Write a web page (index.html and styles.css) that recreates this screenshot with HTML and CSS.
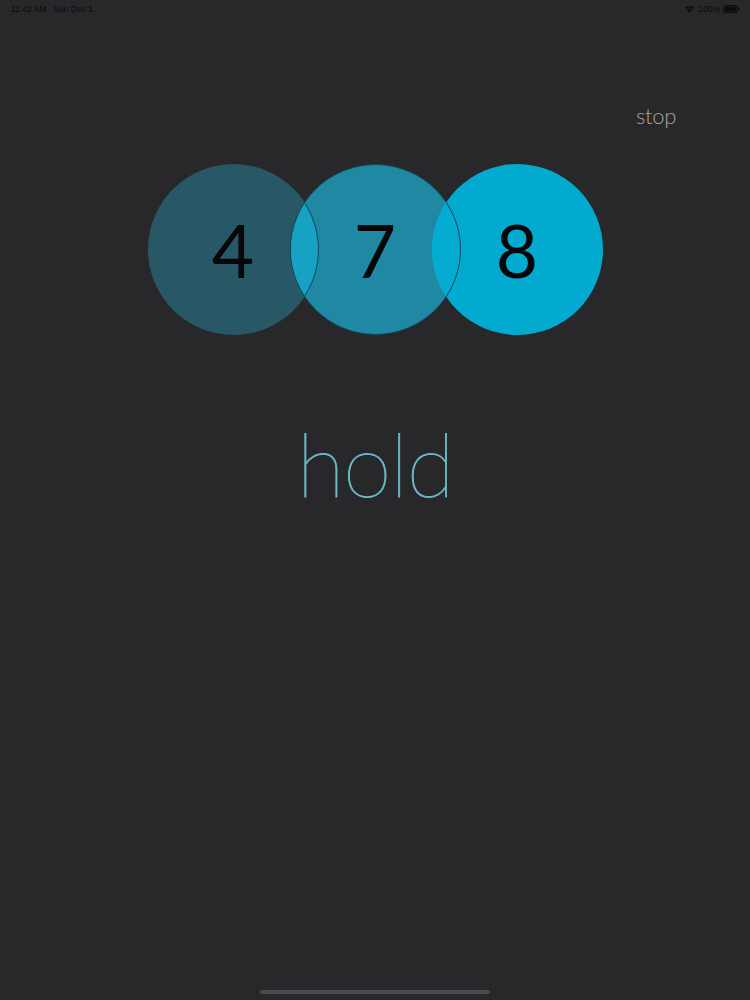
FILE: index.html
```html
<!DOCTYPE html>
<html>
<head>
<meta charset="utf-8">
<link rel="stylesheet" href="styles.css">
</head>
<body>
<div class="screen">
  <div class="status">
    <div class="status-left"><span>11:42 AM</span><span>Sun Dec 1</span></div>
    <div class="status-right">
      <svg class="wifi" width="11" height="8" viewBox="0 0 11 8"><path d="M5.5 8 L3.6 5.9 A2.8 2.8 0 0 1 7.4 5.9 Z" fill="#0c0c0c"/><path d="M2.4 4.6 A4.6 4.6 0 0 1 8.6 4.6 L7.8 5.4 A3.5 3.5 0 0 0 3.2 5.4 Z" fill="#0c0c0c"/><path d="M0.6 2.8 A7.2 7.2 0 0 1 10.4 2.8 L9.5 3.7 A6 6 0 0 0 1.5 3.7 Z" fill="#0c0c0c"/></svg>
      <span>100%</span>
      <svg class="battery" width="17" height="8" viewBox="0 0 17 8"><rect x="0.5" y="0.5" width="14" height="7" rx="1.8" fill="none" stroke="#0c0c0c" stroke-width="1"/><rect x="1.6" y="1.6" width="11.8" height="4.8" rx="1" fill="#0c0c0c"/><rect x="15.3" y="2.6" width="1.2" height="2.8" rx="0.5" fill="#0c0c0c"/></svg>
    </div>
  </div>
  <div class="top-row"><span class="stop">stop</span></div>
  <div class="circles">
    <div class="circle c1"><span class="num">4</span></div>
    <div class="circle c2"><span class="num">7</span></div>
    <div class="circle c3"><span class="num">8</span></div>
  </div>
  <div class="word">hold</div>
  <div class="home"></div>
</div>
</body>
</html>
```
FILE: styles.css
```css
html, body {
  margin: 0;
  padding: 0;
  background: #28272a;
}
.screen {
  width: 750px;
  height: 1000px;
  display: flex;
  flex-direction: column;
  background: #28272a;
  font-family: "Lato", "Liberation Sans", sans-serif;
  overflow: hidden;
}
.status {
  height: 18px;
  padding: 0 10px 0 11px;
  display: flex;
  justify-content: space-between;
  align-items: center;
  font-family: "Liberation Sans", sans-serif;
  font-size: 8.5px;
  color: #0c0c0c;
}
.status-left {
  display: flex;
  gap: 7px;
}
.status-right {
  display: flex;
  align-items: center;
  gap: 3px;
}
.top-row {
  display: flex;
  justify-content: flex-end;
  padding-right: 74px;
  margin-top: 84px;
  height: 28px;
}
.stop {
  font-family: "Lato", sans-serif;
  font-weight: 300;
  font-size: 22px;
  color: #a2a2a5;
  line-height: 28px;
  letter-spacing: -0.3px;
}
.circles {
  display: flex;
  justify-content: center;
  margin-top: 34px;
}
.circle {
  position: relative;
  width: 171px;
  height: 171px;
  border-radius: 50%;
  overflow: hidden;
  display: flex;
  align-items: center;
  justify-content: center;
  box-sizing: border-box;
}
.circle + .circle {
  margin-left: -29px;
}
.c1 {
  background: #285766;
}
.c2 {
  background: #1f89a3;
  border: 1px solid #0f4656;
}
.c3 {
  background: #02aad0;
}
.c2::before,
.c3::before {
  content: "";
  position: absolute;
  top: -1px;
  left: -143px;
  width: 171px;
  height: 171px;
  border-radius: 50%;
  box-sizing: border-box;
  border: 1px solid #0f4656;
}
.c2::before {
  background: #16a2c2;
}
.c3::before {
  top: 0;
  left: -142px;
  background: #05acd2;
}
.num {
  position: relative;
  font-family: "Lato", sans-serif;
  font-size: 73px;
  font-weight: 400;
  color: #070707;
  line-height: 1;
  margin-top: 2px;
}
.word {
  margin-top: 84px;
  text-align: center;
  font-family: "Lato", sans-serif;
  font-weight: 100;
  font-size: 88px;
  letter-spacing: -1.5px;
  line-height: 1;
  color: #6ab9c4;
  -webkit-text-stroke: 0.9px #6ab9c4;
}
.home {
  margin-top: auto;
  margin-bottom: 6px;
  align-self: center;
  width: 230px;
  height: 4px;
  border-radius: 2px;
  background: #4b4a4e;
}
```
